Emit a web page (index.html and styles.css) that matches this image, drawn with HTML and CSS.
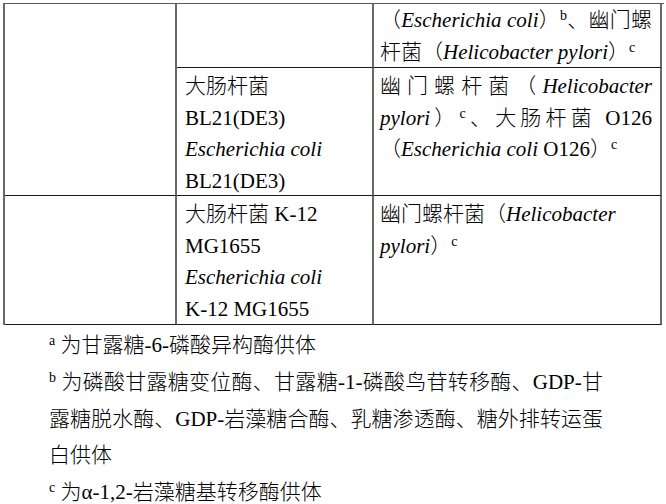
FILE: index.html
```html
<!DOCTYPE html>
<html lang="zh-CN">
<head>
<meta charset="utf-8">
<title>菌株表</title>
<link rel="stylesheet" href="styles.css">
</head>
<body>
<div class="tbl">
  <div class="cell c1 span2"></div>
  <div class="cell c2 r1"></div>
  <div class="cell c3 r1">
    <span class="ln jst">（<i>Escherichia coli</i>）<span class="sup">b</span>、幽门螺</span>
    <span class="ln">杆菌（<i>Helicobacter pylori</i>）<span class="sup">c</span></span>
  </div>
  <div class="cell c2 rx">
    <span class="ln">大肠杆菌</span>
    <span class="ln">BL21(DE3)</span>
    <span class="ln"><i>Escherichia coli</i></span>
    <span class="ln">BL21(DE3)</span>
  </div>
  <div class="cell c3 rx">
    <span class="ln jst">幽门螺杆菌（<i>Helicobacter</i></span>
    <span class="ln jst"><i>pylori</i>）<span class="sup">c</span>、大肠杆菌 O126</span>
    <span class="ln">（<i>Escherichia coli</i> O126）<span class="sup">c</span></span>
  </div>
  <div class="cell c1 rx last"></div>
  <div class="cell c2 rx last">
    <span class="ln">大肠杆菌 K-12</span>
    <span class="ln">MG1655</span>
    <span class="ln"><i>Escherichia coli</i></span>
    <span class="ln">K-12 MG1655</span>
  </div>
  <div class="cell c3 rx last">
    <span class="ln">幽门螺杆菌（<i>Helicobacter</i></span>
    <span class="ln"><i>pylori</i>）<span class="sup">c</span></span>
  </div>
</div>
<div class="notes">
  <p class="note"><span class="sup">a</span> 为甘露糖-6-磷酸异构酶供体</p>
  <p class="note">
    <span class="ln jst"><span class="sup">b</span> 为磷酸甘露糖变位酶、甘露糖-1-磷酸鸟苷转移酶、GDP-甘</span>
    <span class="ln jst">露糖脱水酶、GDP-岩藻糖合酶、乳糖渗透酶、糖外排转运蛋</span>
    <span class="ln">白供体</span>
  </p>
  <p class="note"><span class="sup">c</span> 为α-1,2-岩藻糖基转移酶供体</p>
</div>
</body>
</html>
```

FILE: styles.css
```css
html, body {
  margin: 0;
  padding: 0;
  background: #ffffff;
}
body {
  font-family: "Liberation Serif", "Noto Sans CJK SC", serif;
  font-size: 21px;
  font-weight: 300;
  color: #000000;
}
i {
  font-style: italic;
}
.tbl {
  display: grid;
  grid-template-columns: 172px 197px 288px;
  grid-template-rows: 64px 128px 129px;
  width: 659px;
  margin: 3px 0 0 3px;
  border-left: 2px solid #6a6a6a;
  border-top: 1px solid #5a5a5a;
}
.cell {
  box-sizing: border-box;
  border-right: 2px solid #6a6a6a;
  border-bottom: 1px solid #1a1a1a;
  line-height: 31.5px;
}
.span2 {
  grid-row: span 2;
}
.c2 {
  padding: 0 6px 0 8px;
}
.c3 {
  padding: 0 8px 0 6px;
}
.r1 {
  padding-top: 1px;
}
.rx {
  padding-top: 3px;
}
.ln {
  display: block;
}
.jst {
  text-align: justify;
  text-align-last: justify;
}
.sup {
  font-size: 14px;
  line-height: 0;
  vertical-align: 7px;
}
.notes {
  width: 554px;
  margin: 2px 0 0 49px;
}
.note {
  margin: 0;
  line-height: 36.8px;
}
```
